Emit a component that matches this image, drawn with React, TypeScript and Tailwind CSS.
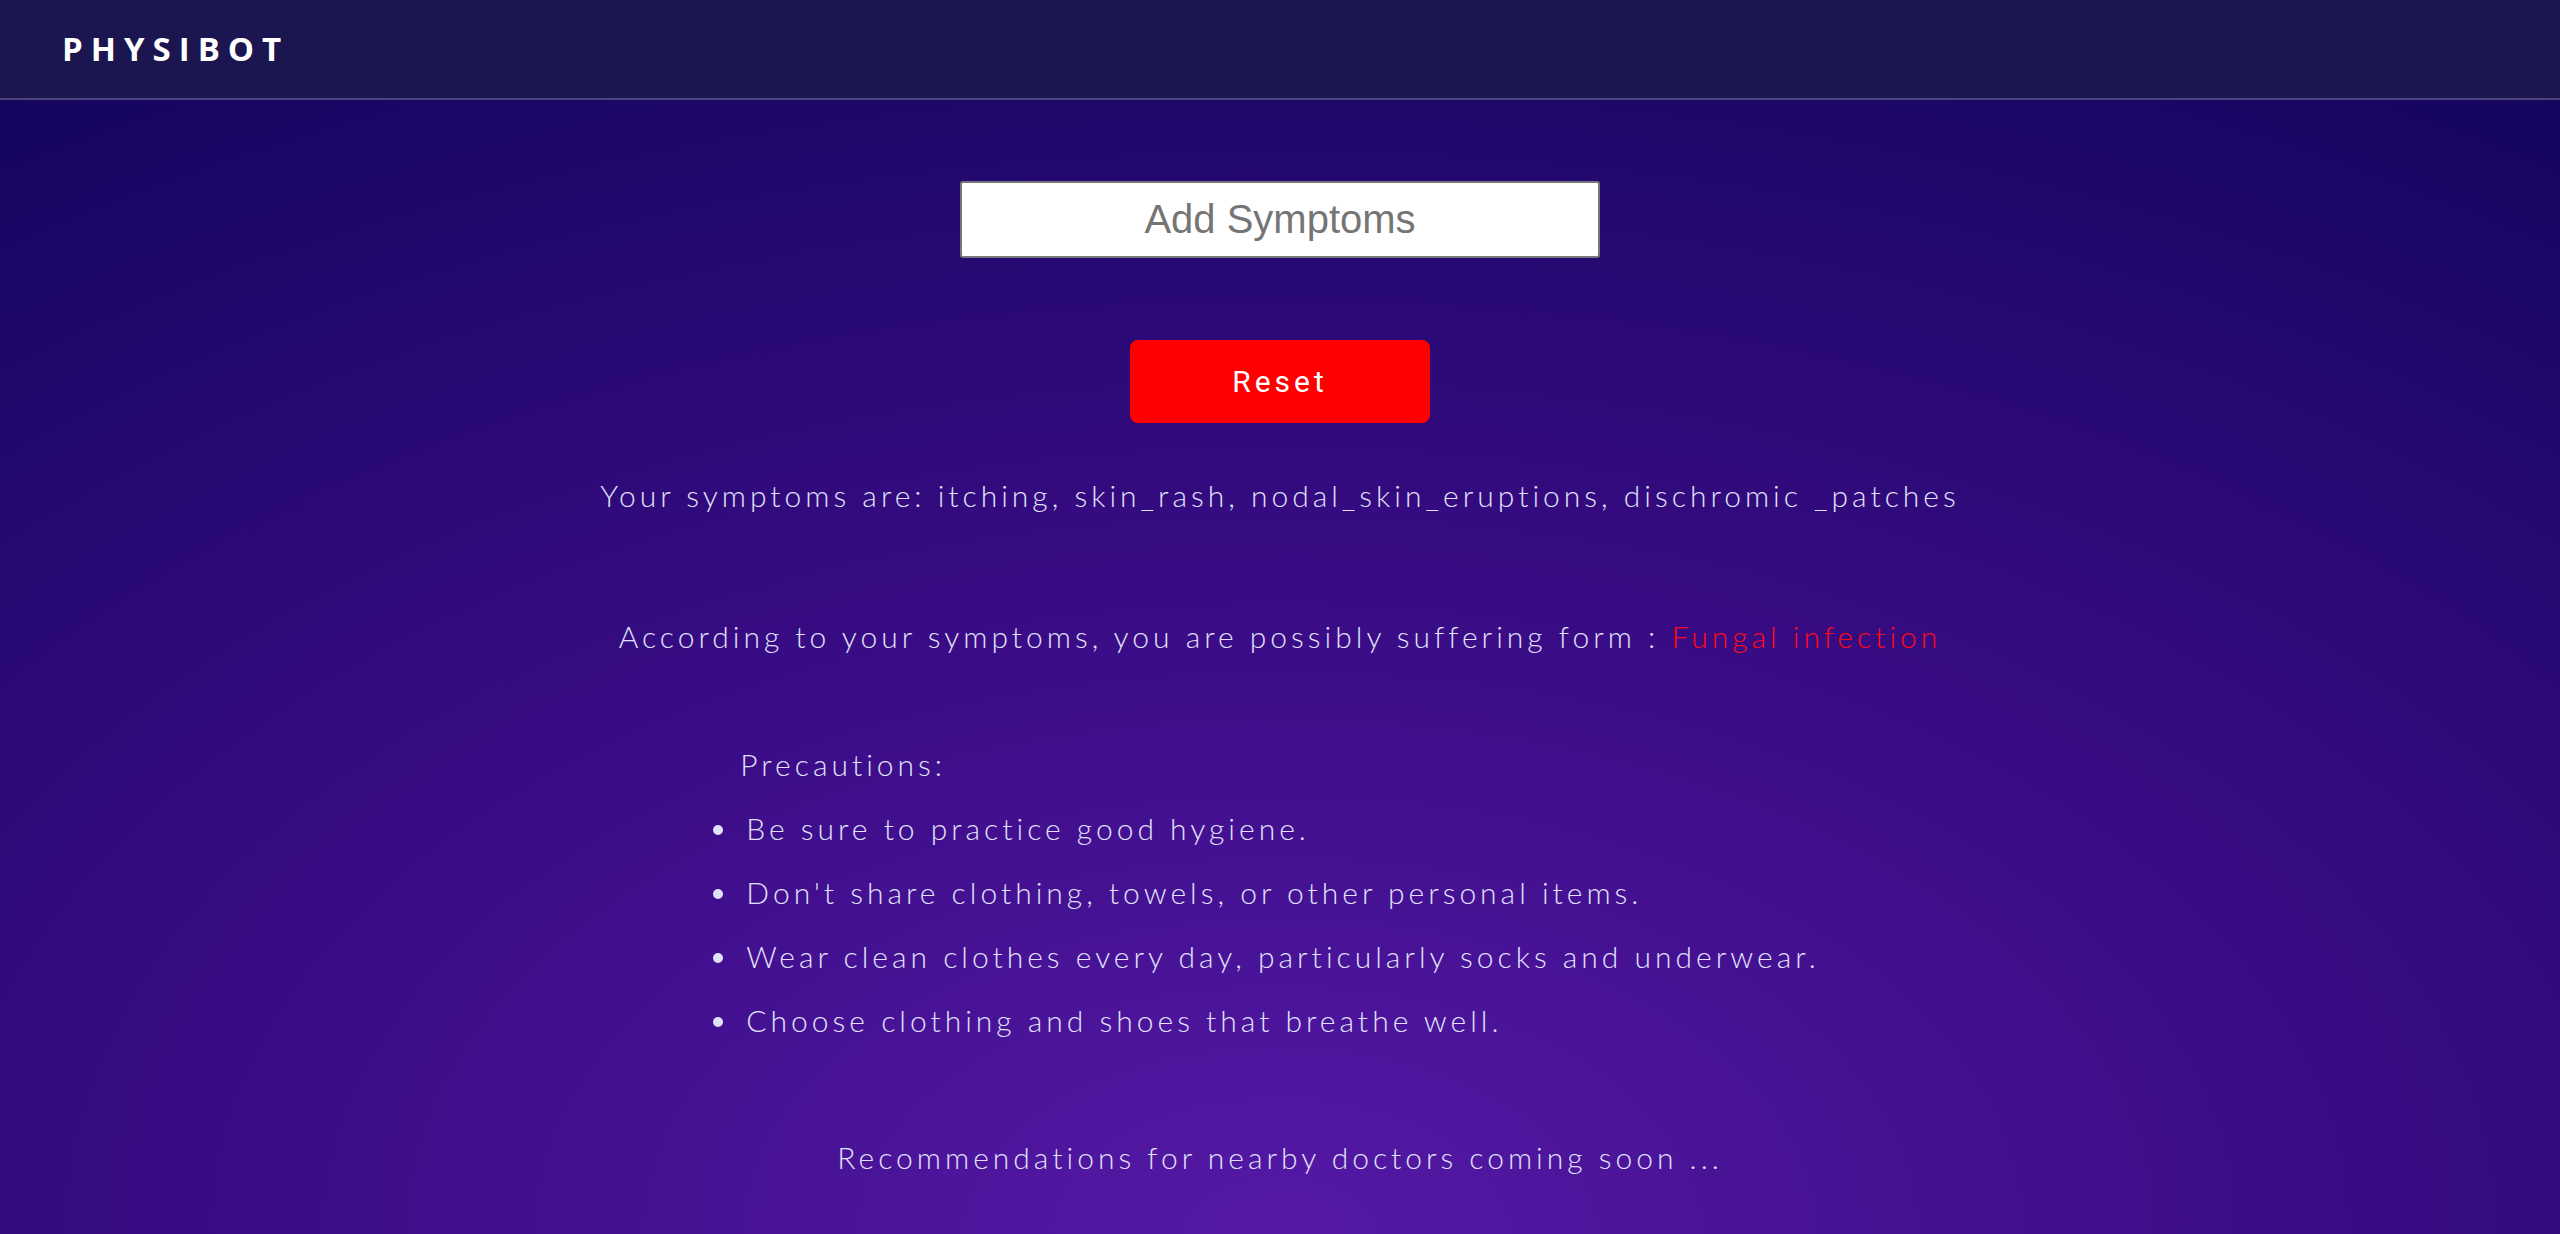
import React from "react";

const body = "font-['Lato','Open_Sans',sans-serif] font-light text-[30px] leading-[40px] tracking-[4px] text-[#e0e1fa]";

export default function App() {
  return (
    <div className="min-h-[1234px] w-full bg-[radial-gradient(ellipse_90%_110%_at_50%_100%,#5519a6_0%,#3a0c86_45%,#14055e_100%)]">
      <header className="flex h-[100px] items-center border-b-2 border-[#4b4680] bg-[#1c1650] pl-[62px]">
        <span className="font-['Open_Sans',sans-serif] text-[33px] font-bold tracking-[8px] text-white">PHYSIBOT</span>
      </header>
      <main className="flex flex-col items-center pt-[81px]">
        <input
          type="text"
          placeholder="Add Symptoms"
          className="h-[77px] w-[640px] rounded-[3px] border-2 border-[#767676] bg-white text-center font-['Liberation_Sans',Arial,sans-serif] text-[40px] text-black placeholder:text-[#757575] outline-none"
        />
        <button className="mt-[82px] h-[83px] w-[300px] rounded-[8px] bg-[#ff0000] font-['Roboto',sans-serif] text-[30px] tracking-[4px] text-white">
          Reset
        </button>
        <p className={`mt-[52px] ${body}`}>
          Your symptoms are: itching, skin_rash, nodal_skin_eruptions, dischromic _patches
        </p>
        <p className={`mt-[101px] ${body}`}>
          According to your symptoms, you are possibly suffering form : <span className="text-[#ff0a14]">Fungal infection</span>
        </p>
        <div className={`mt-[88px] w-fit text-left ${body}`}>
          <p>Precautions:</p>
          <ul className="mt-[24px] flex list-outside list-disc flex-col gap-[24px] pl-0 marker:text-[#e0e1fa]">
            <li className="pl-[6px]">Be sure to practice good hygiene.</li>
            <li className="pl-[6px]">Don't share clothing, towels, or other personal items.</li>
            <li className="pl-[6px]">Wear clean clothes every day, particularly socks and underwear.</li>
            <li className="pl-[6px]">Choose clothing and shoes that breathe well.</li>
          </ul>
        </div>
        <p className={`mt-[97px] ${body}`}>Recommendations for nearby doctors coming soon ...</p>
      </main>
    </div>
  );
}
